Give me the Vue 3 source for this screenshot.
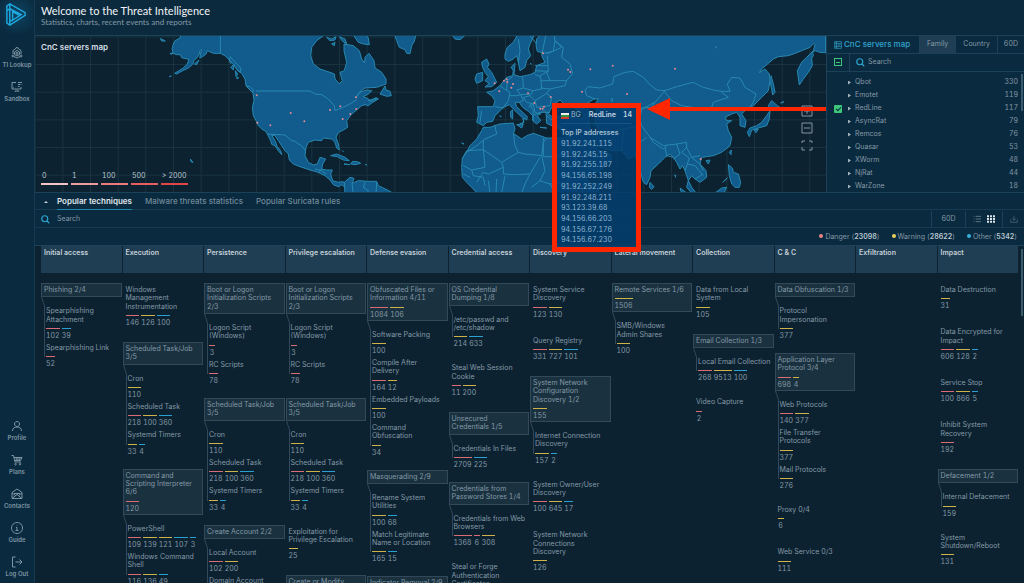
<script setup>
import { ref } from 'vue'

const topNav = [
  { label: 'TI Lookup', icon: 'lookup' },
  { label: 'Sandbox', icon: 'sandbox' },
]
const bottomNav = [
  { label: 'Profile', icon: 'profile' },
  { label: 'Plans', icon: 'plans' },
  { label: 'Contacts', icon: 'contacts' },
  { label: 'Guide', icon: 'guide' },
  { label: 'Log Out', icon: 'logout' },
]
const icons = {
  lookup: 'M9 4a3 3 0 0 1 6 0 M9 4L4 7v7 M15 4l5 3v7 M2 18a2 2 0 1 0 4 0a2 2 0 1 0-4 0 M18 18a2 2 0 1 0 4 0a2 2 0 1 0-4 0 M6 19l6 3l6-3 M12 7l5 3v5l-5 3l-5-3v-5z M12 11a2 2 0 1 0 .1 0',
  sandbox: 'M10 3H2v13h18v-4 M9 20h6 M8 22l2-3 M16 22l-2-3 M14 3h8 M14 7h5 M22 7v1 M14 11h3 M5 12v1',
  profile: 'M12 3a5 5 0 1 0 .1 0z M3 22c0-6 4-8 9-8s9 2 9 8',
  plans: 'M1 3h4l3 13h12 M6 7h16l-3 6H8 M10 7l1 6 M14 7v6 M18 7l-1 6 M9 19a1.500 1.500 0 1 0 .1 0z M18 19a1.500 1.500 0 1 0 .1 0z',
  contacts: 'M2 9l10-7l10 7v12H2z M2 10l7 5 M22 10l-7 5 M2 21l10-8l10 8 M6 11h12',
  guide: 'M12 1a11 11 0 1 0 .1 0z M12 6v1 M10 11h2v6 M9 17h6',
  logout: 'M9 2H3v20h6 M9 12h13 M17 7l5 5l-5 5',
}

const scale = [
  { label: '0', tone: 's0' },
  { label: '1', tone: 's1' },
  { label: '100', tone: 's2' },
  { label: '500', tone: 's3' },
  { label: '> 2000', tone: 's4' },
]

const ips = ['91.92.241.115', '91.92.245.15', '91.92.255.187', '94.156.65.198', '91.92.252.249', '91.92.248.211', '93.123.39.68', '94.156.66.203', '94.156.67.176', '94.156.67.230']

const families = [
  ['Qbot', 330], ['Emotet', 119], ['RedLine', 117], ['AsyncRat', 79], ['Remcos', 76],
  ['Quasar', 53], ['XWorm', 48], ['NjRat', 44], ['WarZone', 18],
]
const redline = ref(true)
const tabs = ['Popular techniques', 'Malware threats statistics', 'Popular Suricata rules']
const legend = [['Danger', 23098, 'r'], ['Warning', 28622, 'y'], ['Other', 5342, 'b']]

// A count is written as severity letter + value: r danger, y warning, b other
const parse = (s) => (s ? s.split(' ').map((c) => ({ tone: c[0], value: c.slice(1) })) : [])
const t = (name, counts, subs) => ({
  name,
  counts: parse(counts),
  subs: subs ? subs.map(([n, c]) => ({ name: n, counts: parse(c) })) : null,
})
const scheduled = () => t('Scheduled Task/Job 3/5', '', [['Cron', 'y110'], ['Scheduled Task', 'r218 y100 b360'], ['Systemd Timers', 'y33 b4']])
const bootLogon = () => t('Boot or Logon Initialization Scripts 2/3', '', [['Logon Script (Windows)', 'r3'], ['RC Scripts', 'r78']])

const columns = [
  { title: 'Initial access', items: [t('Phishing 2/4', '', [['Spearphishing Attachment', 'r102 b39'], ['Spearphishing Link', 'r52']])] },
  {
    title: 'Execution',
    items: [
      t('Windows Management Instrumentation', 'r146 y126 b100'),
      scheduled(),
      t('Command and Scripting Interpreter 6/6', 'r120', [['PowerShell', 'r109 y139 y121 b107 b3'], ['Windows Command Shell', 'r116 y136 b49']]),
    ],
  },
  { title: 'Persistence', items: [bootLogon(), scheduled(), t('Create Account 2/2', '', [['Local Account', 'r102 y200'], ['Domain Account', 'r100']])] },
  { title: 'Privilege escalation', items: [bootLogon(), scheduled(), t('Exploitation for Privilege Escalation', 'y25'), t('Create or Modify System Process 1/4', '', [['Windows Service', 'r100']])] },
  {
    title: 'Defense evasion',
    items: [
      t('Obfuscated Files or Information 4/11', 'r1084 y106', [['Software Packing', 'y100'], ['Compile After\nDelivery', 'r164 y12'], ['Embedded Payloads', 'y100'], ['Command Obfuscation', 'y34']]),
      t('Masquerading 2/9', '', [['Rename System Utilities', 'y100 b68'], ['Match Legitimate Name or Location', 'y165 b15']]),
      t('Indicator Removal 2/9', '', [['File Deletion', 'y100']]),
    ],
  },
  {
    title: 'Credential access',
    items: [
      t('OS Credential Dumping 1/8', '', [['/etc/passwd and /etc/shadow', 'y214 b633']]),
      t('Steal Web Session Cookie', 'r11 y200'),
      t('Unsecured Credentials 1/5', '', [['Credentials In Files', 'r2709 b225']]),
      t('Credentials from Password Stores 1/4', '', [['Credentials from Web Browsers', 'r1368 r6 y308']]),
      t('Steal or Forge Authentication Certificates', 'y100'),
    ],
  },
  {
    title: 'Discovery',
    items: [
      t('System Service Discovery', 'r123 y130'),
      t('Query Registry', 'r331 y727 b101'),
      t('System Network Configuration Discovery 1/2', 'y155', [['Internet Connection Discovery', 'y157 b2']]),
      t('System Owner/User Discovery', 'r100 y645 b17'),
      t('System Network Connections Discovery', 'y126'),
    ],
  },
  { title: 'Lateral movement', items: [t('Remote Services 1/6', 'y1506', [['SMB/Windows\nAdmin Shares', 'y100']])] },
  {
    title: 'Collection',
    items: [t('Data from Local System', 'y105'), t('Email Collection 1/3', '', [['Local Email Collection', 'r268 y9513 b100']]), t('Video Capture', 'r2')],
  },
  {
    title: 'C & C',
    items: [
      t('Data Obfuscation 1/3', '', [['Protocol Impersonation', 'y377']]),
      t('Application Layer Protocol 3/4', 'r698 y4', [['Web Protocols', 'r140 y377'], ['File Transfer\nProtocols', 'y377'], ['Mail Protocols', 'y276']]),
      t('Proxy 0/4', 'y6'),
      t('Web Service 0/3', 'y111'),
    ],
  },
  { title: 'Exfiltration', items: [] },
  {
    title: 'Impact',
    items: [
      t('Data Destruction', 'y31'),
      t('Data Encrypted for Impact', 'r606 y128 b2'),
      t('Service Stop', 'r100 y866 b5'),
      t('Inhibit System Recovery', 'r192'),
      t('Defacement 1/2', '', [['Internal Defacement', 'y159']]),
      t('System Shutdown/Reboot', 'y131'),
    ],
  },
]

const west = [
  'M545 100L540 112 525 120 520 130 516 145 520 158 530 162 541 162 545 171 567 176 562 190 550 202 524 218 530 220 548 210 565 202 578 191 582 180 590 172 597 163 600 150 604 146 602 160 599 172 608 168 618 160 622 150 640 158 661 158 675 165 688 178 691 188 700 184 705 198 715 212 725 218 735 235 738 255 748 265 758 275 760 283 762 300 757 320 760 345 768 360 775 375 785 385 797 392 802 400 812 420 815 431 825 435 835 450 845 462 842 450 832 438 825 420 815 403 825 405 835 420 845 435 855 450 865 460 868 478 880 490 900 498 930 508 955 515 975 525 990 538 1000 552 1015 558 1025 552 1035 560 1040 548 1028 543 1015 545 998 540 992 520 997 508 980 508 965 505 968 490 977 475 960 470 952 490 940 493 925 485 915 465 918 440 925 425 945 418 965 420 970 412 995 415 1005 425 1010 442 1018 448 1015 430 1008 410 1015 395 1030 388 1043 380 1040 360 1055 340 1070 328 1085 315 1095 312 1105 315 1118 305 1135 295 1128 291 1112 300 1100 292 1090 288 1108 278 1115 270 1100 268 1080 275 1068 290 1078 274 1095 262 1130 260 1158 250 1158 235 1145 215 1125 202 1122 180 1107 158 1095 170 1094 187 1085 175 1078 150 1060 135 1032 130 1032 150 1040 185 1033 210 1020 215 1027 240 1018 250 1005 235 1003 220 990 215 960 205 940 190 932 165 935 140 950 120 970 105 980 98z',
  'M1033 545L1050 530 1062 533 1056 548 1075 540 1105 542 1130 542 1135 555 1162 568 1187 582 1035 582z',
  'M1183 100L1190 120 1198 140 1215 147 1220 158 1230 159 1235 135 1243 122 1248 100z',
  'M1355 100L1365 115 1380 117 1400 100z',
  'M1058 100L1075 125 1090 130 1108 132 1105 112 1095 100z M980 110L995 115 1008 108 1005 118 990 120z M995 130L1005 125 1003 135z M1018 108L1035 115 1040 130 1028 122z',
  'M1140 280L1155 256 1158 268 1170 272 1174 285 1160 287z M1105 300L1130 292 1120 302z',
  'M992 465L1010 460 1035 470 1048 480 1030 478 1012 468z M1032 490L1050 492z M1052 490L1058 482 1075 484 1082 488 1065 492z M1095 491L1100 493z M1027 450L1030 453z M1385 427L1392 430z',
  'M481 114L487 116 496 121 485 121z M510 158L519 157 514 162z M583 190L597 178 590 192z M508 228L514 226z M571 475L579 485 574 484z M692 200L702 190 700 208z M706 210L713 220 708 228z M712 228L716 232 710 234z',
  'M690 168L700 178 712 192 722 202 722 216 710 205 700 190 688 178z M738 256L750 258 762 270 756 274z',
]
const europe = [
  'M1660 90L1665 120 1660 152 1630 158 1612 152 1608 135 1610 115 1625 98 1605 98 1590 130 1585 145 1592 165 1580 180 1575 200 1560 210 1555 185 1550 165 1540 175 1525 182 1515 175 1515 160 1522 140 1540 125 1555 98z M1640 90L2477 90 2477 156 2460 155 2445 150 2438 155 2440 165 2435 172 2437 195 2425 215 2410 235 2398 253 2392 210 2405 185 2420 170 2440 150 2445 132 2442 128 2430 140 2405 150 2380 160 2365 165 2335 168 2320 175 2285 205 2278 216 2295 205 2308 220 2310 240 2305 270 2285 290 2260 315 2235 330 2225 340 2238 360 2235 380 2220 375 2220 350 2210 335 2195 340 2175 350 2180 360 2195 360 2180 370 2185 390 2195 410 2190 435 2165 455 2140 465 2120 468 2105 470 2100 490 2118 510 2120 530 2100 545 2085 535 2075 525 2065 540 2075 560 2088 577 2075 577 2060 560 2065 540 2055 510 2048 495 2040 505 2030 485 2020 470 2010 460 1995 470 1975 490 1953 510 1950 530 1940 552 1930 545 1923 520 1910 480 1905 465 1885 475 1865 450 1835 450 1800 440 1770 430 1790 445 1830 460 1835 475 1800 510 1750 530 1715 480 1695 435 1700 395 1640 368 1638 335 1632 330 1612 345 1622 360 1610 370 1600 362 1598 345 1585 332 1568 320 1558 305 1545 305 1550 318 1568 335 1582 348 1580 358 1572 352 1570 365 1555 373 1572 365 1568 352 1540 325 1528 312 1510 320 1500 330 1485 345 1478 362 1460 365 1450 375 1430 365 1435 345 1433 318 1480 318 1485 300 1475 285 1460 275 1480 270 1500 255 1510 242 1520 230 1538 225 1540 210 1533 200 1545 188 1542 222 1560 228 1590 222 1605 215 1610 195 1635 185 1625 165z',
  'M1445 185L1460 175 1467 190 1462 200 1475 215 1485 235 1490 245 1475 258 1455 259 1468 248 1455 240 1465 228 1455 215 1448 200z M1430 220L1448 215 1448 240 1430 248 1425 235z',
  'M1450 380L1470 380 1500 370 1540 367 1545 385 1540 398 1565 415 1580 405 1600 398 1640 412 1700 412 1715 450 1740 510 1770 550 1800 548 1790 582 1435 582 1420 565 1400 545 1387 530 1385 500 1387 472 1400 455 1410 435 1430 415 1445 390z',
  'M1532 332L1538 328 1538 355 1532 350z M1499 346L1504 348z M1550 372L1570 370 1565 382z M1620 380L1640 382z M1590 188L1594 190z',
  'M2313 225L2320 250 2325 275 2318 283 2312 250z M2305 315L2315 300 2332 315 2342 322 2320 330 2308 325z M2310 330L2308 355 2300 375 2275 382 2255 388 2248 408 2242 395 2250 382 2270 375 2285 365 2300 345z M2262 388L2275 385 2268 396z M2188 455L2194 448 2193 462z M2185 492L2197 502 2200 515 2215 520 2222 545 2218 560 2205 560 2195 550 2188 525z M2118 480L2130 478 2125 490z M1950 545L1962 558 1955 566 1948 560z M2040 562L2060 577 2045 577z M2145 577L2165 562 2180 560 2172 577z M2025 522L2027 530z M2342 307L2352 303z M2168 545L2182 532z',
]
const seas = [
  'M1655 320L1665 308 1680 298 1690 308 1710 312 1735 330 1755 345 1740 355 1690 345 1660 350 1645 340z',
  'M1762 308L1780 296 1795 294 1785 312 1790 330 1785 370 1800 390 1785 405 1770 385 1765 350z',
  'M1832 298L1838 292 1836 304z M2145 142L2150 138z',
]
const borders = 'M661 105V158 M768 271H930L945 280 965 282 985 295 1003 315 1005 330 1025 322 1050 310 1070 297 M802 400L855 403 875 420 885 422 893 428 905 436 915 448'
  + ' M945 505L965 510 980 520 M965 505L955 518 M1095 545L1090 560 1105 570 1100 582 M1056 548L1060 582 M1130 545L1128 582'
  + ' M1755 268L1765 258 1800 262 1838 250 1842 228 1875 215 1900 212 1930 230 1950 252 1970 268 1995 270 2030 258 2060 250 2080 245 2110 260 2140 268 2170 273 2190 272 2182 250 2195 230 2220 232 2235 260 2268 280 2260 305 2245 325'
  + ' M1990 268L2015 300 2045 315 2090 322 2135 320 2140 305 2185 290 2165 275 M1995 270L1965 305 1925 325 1920 355 1925 375 1950 410 1990 435 2030 430 2060 425 2060 440 2075 470 2100 465'
  + ' M1755 268L1760 285 1785 295 M1800 320L1840 315 1855 330 1890 320 1930 322 1955 320 1965 305 M1800 390L1835 395 1870 385 1920 375 M1870 385L1865 450 M1905 465L1915 430 1940 410 M1950 410L1960 425 1990 445 2000 436 M1995 440L2000 465 2020 470 M2030 430L2040 460 2020 475 M2060 440L2045 455 2068 472 2062 490 2085 495 2110 525 M2062 490L2055 510 M2085 535L2110 520 M2075 470L2100 490 2110 510'
  + ' M1700 395L1750 395 1785 400 M1700 395L1720 430 1755 440 M1640 345L1700 395 M1795 510L1755 500 M1830 460L1800 480'
  + ' M1485 318L1513 322 M1445 330L1440 365 M1500 255L1520 270 1530 275 1525 300 1510 320 M1520 270L1522 240 1538 228 M1568 228L1570 262 1550 268 1562 282 1590 280 M1530 285L1550 285 1562 282 1570 300 1558 305 M1570 262L1600 270 1625 265 1622 228 1605 222 M1600 270L1590 285 1605 300 1640 278 1650 265 1695 255 1700 240 1718 218 1710 190 1685 170 1690 140 1665 120 M1622 240L1650 240 1700 240 M1590 285L1570 290 1580 305 1600 310 1605 335 1622 342 M1605 300L1610 320 1650 315 1655 290 1640 278 M1600 310L1585 320 M1598 345L1620 335 1650 335 M1650 265L1622 262 M1590 310L1600 330 1598 360 M1605 195L1642 195 M1605 210L1645 212 M1642 165L1645 212 1620 225 M1650 240L1640 215 M1555 185L1560 150 1555 115 M1610 130L1590 105 M1665 120L1685 140 1640 160'
  + ' M1484 372L1490 400 1455 415 1430 435 1400 455 M1450 418L1450 447 1400 450 1388 472 M1450 447L1505 485 1555 455 1545 435 1540 398 M1555 455L1575 460 1625 465 1630 425 1640 412 M1630 412L1630 468 1700 468 M1505 485L1510 500 1465 520 1450 515 1440 530 M1450 447L1455 500 1415 508 1390 495 M1415 508L1420 525 1450 530 1455 555 M1510 500L1510 520 1540 522 1590 520 1620 470 M1590 520L1575 550 1565 577 M1625 465L1635 510 1620 540 1650 550 1665 577 M1700 468L1715 520 1700 545 1650 550 M1465 540L1470 577 M1490 535L1488 577 M1515 525L1505 577 M1390 520L1410 530 M1595 560L1620 540 M1440 530L1430 545'
const hits = [[770, 284], [872, 337], [772, 366], [811, 374], [913, 362], [990, 328], [1021, 317], [1028, 355], [1051, 340], [1069, 325], [1068, 290], [1484, 248], [1498, 272], [1512, 240], [1520, 236], [1522, 244], [1534, 261], [1539, 250], [1584, 278], [1603, 307], [1621, 324], [1628, 324], [1632, 318], [1652, 289], [1629, 158], [1704, 207], [1711, 214], [1771, 206], [1838, 195], [1746, 273], [1881, 280], [2025, 204], [2102, 475]]
</script>

<template>
  <div class="app">
    <nav class="side" aria-label="Main">
      <a class="logo" href="#" aria-label="Home">
        <svg viewBox="0 0 24 24"><path d="M3 3v18l3 2V1z M6 1l16 9v3L6 23 M6 6l12 6L9 18V9l7 4 M3 8l3-2 M6 19l3-1" /></svg>
      </a>
      <a v-for="n in topNav" :key="n.label" class="nav" href="#">
        <svg viewBox="0 0 24 24"><path :d="icons[n.icon]" /></svg>
        <span>{{ n.label }}</span>
      </a>
      <div class="spacer"></div>
      <a v-for="n in bottomNav" :key="n.label" class="nav" href="#">
        <svg viewBox="0 0 24 24"><path :d="icons[n.icon]" /></svg>
        <span>{{ n.label }}</span>
      </a>
    </nav>

    <main class="main">
      <header class="head">
        <h1>Welcome to the Threat Intelligence</h1>
        <p>Statistics, charts, recent events and reports</p>
      </header>

      <section class="top">
        <div class="map">
          <svg class="world" viewBox="105 106 2373 470" preserveAspectRatio="xMinYMin slice">
            <defs>
              <pattern id="cells" x="104" y="107" width="83" height="83" patternUnits="userSpaceOnUse">
                <path d="M0 1.500H83 M1.500 0V83" />
              </pattern>
            </defs>
            <rect class="water" x="105" y="106" width="2373" height="470" />
            <rect x="105" y="106" width="2373" height="470" fill="url(#cells)" />
            <path v-for="d in west" :key="d" class="land" :d="d" />
            <path v-for="d in europe" :key="d" class="land" :d="d" />
            <path v-for="d in seas" :key="d" class="sea" :d="d" />
            <path class="border" :d="borders" />
            <circle v-for="(h, i) in hits" :key="i" class="hit" :cx="h[0]" :cy="h[1]" r="3" />
          </svg>
          <h2>CnC servers map</h2>
          <ul class="scale">
            <li v-for="s in scale" :key="s.label"><span>{{ s.label }}</span><i :class="s.tone"></i></li>
          </ul>
          <div class="tools">
            <button aria-label="Zoom in"><svg viewBox="0 0 12 12"><path d="M1 1h10v10H1z M3 6h6 M6 3v6" /></svg></button>
            <button aria-label="Zoom out"><svg viewBox="0 0 12 12"><path d="M1 1h10v10H1z M3 6h6" /></svg></button>
            <button aria-label="Full screen"><svg viewBox="0 0 12 12"><path d="M1 4V2h3 M8 2h3v2 M11 8v3H8 M4 11H1V8" /></svg></button>
          </div>
          <div class="popup">
            <div class="pophead"><i class="flag"></i><span>BG</span><b>RedLine</b><b class="n">14</b></div>
            <strong>Top IP addresses</strong>
            <ul><li v-for="ip in ips" :key="ip">{{ ip }}</li></ul>
          </div>
          <div class="arrow"><svg viewBox="0 0 23 22"><path d="M0 11L23 0V22z" /></svg><i></i></div>
        </div>

        <aside class="panel">
          <div class="phead">
            <h2>
              <svg viewBox="0 0 12 12"><path d="M1 1h10v10H1z M1 4h10 M1 8h10 M3 2v1 M3 6h1 M6 6h3 M3 9v1 M4 1v10" /></svg>
              CnC servers map
            </h2>
            <button class="on">Family</button>
            <button>Country</button>
            <button>60D</button>
          </div>
          <div class="psearch">
            <button class="minus" aria-label="Collapse selection"></button>
            <label>
              <svg viewBox="0 0 12 12"><circle cx="5" cy="5" r="4" /><path d="M8 8l3 3" /></svg>
              <input type="text" placeholder="Search" aria-label="Search families" />
            </label>
          </div>
          <ul class="families">
            <li v-for="[name, n] in families" :key="name">
              <span class="tick"><input v-if="name === 'RedLine'" v-model="redline" type="checkbox" :aria-label="name" /></span>
              <i></i><span class="name">{{ name }}</span><span>{{ n }}</span>
            </li>
          </ul>
          <div class="thumb"></div>
        </aside>
      </section>

      <div class="tabs">
        <i class="caret"></i>
        <button v-for="(tab, i) in tabs" :key="tab" :class="{ on: i === 0 }">{{ tab }}</button>
      </div>

      <div class="bar">
        <label>
          <svg viewBox="0 0 12 12"><circle cx="5" cy="5" r="4" /><path d="M8 8l3 3" /></svg>
          <input type="text" placeholder="Search" aria-label="Search techniques" />
        </label>
        <button class="days">60D</button>
        <div class="views">
          <button aria-label="List view"><svg viewBox="0 0 12 12"><path d="M1 2h1 M4 2h8 M1 6h1 M4 6h8 M1 10h1 M4 10h8" /></svg></button>
          <button class="on" aria-label="Grid view"><svg viewBox="0 0 12 12"><path d="M0 2h3 M4.500 2h3 M9 2h3 M0 6h3 M4.500 6h3 M9 6h3 M0 10h3 M4.500 10h3 M9 10h3" /></svg></button>
        </div>
        <button class="down" aria-label="Download"><svg viewBox="0 0 12 12"><path d="M1 7v4h10V7 M6 1v7 M3 5l3 3l3-3" /></svg></button>
      </div>

      <ul class="legend">
        <li v-for="[name, n, tone] in legend" :key="name"><i :class="tone"></i>{{ name }} (<b>{{ n }}</b>)</li>
      </ul>

      <section class="matrix">
        <div v-for="c in columns" :key="c.title" class="col">
          <h3>{{ c.title }}</h3>
          <template v-for="item in c.items" :key="item.name">
            <div class="tech" :class="{ boxed: item.subs }">
              <p>{{ item.name }}</p>
              <div v-if="item.counts.length" class="counts">
                <span v-for="(n, i) in item.counts" :key="i" :class="n.tone">{{ n.value }}</span>
              </div>
            </div>
            <div v-if="item.subs" class="subs">
              <svg viewBox="0 0 4 9"><path d="M0.500 0L3.500 9" /></svg>
              <div v-for="s in item.subs" :key="s.name" class="sub">
                <p>{{ s.name }}</p>
                <div class="counts">
                  <span v-for="(n, i) in s.counts" :key="i" :class="n.tone">{{ n.value }}</span>
                </div>
              </div>
            </div>
          </template>
        </div>
        <div class="thumb"></div>
      </section>
    </main>
  </div>
</template>

<style>
body { background: #0c2231; }
</style>

<style scoped>
* { box-sizing: border-box; margin: 0; padding: 0; }
ul { list-style: none; }
button { background: none; border: 0; color: inherit; font: inherit; cursor: pointer; }
input { font: inherit; color: #8fa4b0; background: none; border: 0; outline: 0; min-width: 0; }
input::placeholder { color: #8197a5; opacity: 1; }
a { text-decoration: none; color: inherit; }
svg { display: block; fill: none; stroke: currentColor; }
.app { display: flex; height: 100vh; overflow: hidden; font: 7px/1.19 Inter, "Open Sans", sans-serif; font-variant-numeric: tabular-nums; color: #8499a6; background: #0c2231; }

.side { flex: none; width: 35px; display: flex; flex-direction: column; align-items: center; background: #0a2a3f; border-right: 1px solid #163a4f; }
.logo { width: 34px; height: 40px; padding: 3px 4px; color: #1fa8e0; background: radial-gradient(circle at 50% 35%, #0d4562, #0a2a3f 70%); }
.logo svg { width: 23px; height: 23px; stroke-width: 1.500; }
.nav { width: 32px; height: 34px; display: flex; flex-direction: column; align-items: center; gap: 2px; padding-top: 7px; color: #7d95a4; font-size: 6px; font-weight: 600; white-space: nowrap; }
.nav svg { width: 12px; height: 12px; stroke-width: 2; }
.spacer { flex: 1; }

.main { flex: 1; min-width: 0; display: flex; flex-direction: column; }
.head { height: 35px; padding: 4px 6px; background: #0b2a3e; }
.head h1 { font: 400 11px/13px Lato, sans-serif; color: #f0f4f7; }
.head p { font: 8px/10px Lato, sans-serif; color: #8499a6; }

.top { display: flex; height: 158px; border: solid #1b4258; border-width: 1px 0; }
.map { position: relative; flex: 1; min-width: 0; }
.world { width: 100%; height: 100%; overflow: hidden; }
.water { fill: #0c2231; stroke: none; }
pattern path { stroke: #18323f; stroke-width: 3; }
rect { stroke: none; }
.land { fill: #115b8d; stroke: #2889b0; stroke-width: 3; stroke-linejoin: round; }
.sea { fill: #0c2231; stroke: #2889b0; stroke-width: 3; }
.border { stroke: #2889b0; stroke-width: 3; }
.hit { fill: #e58a90; stroke: none; }
.map h2 { position: absolute; left: 6px; top: 6px; font-size: 8px; line-height: 10px; font-weight: 600; color: #d6dfe5; }
.scale { position: absolute; left: 6px; bottom: 7px; display: flex; gap: 3px; color: #b9c6cf; }
.scale li { width: 27px; white-space: nowrap; }
.scale span { display: block; height: 11px; line-height: 8px; padding-left: 1px; }
.scale i { display: block; height: 2px; }
.s0 { background: #f4c3c6; }
.s1 { background: #ef9b9e; }
.s2 { background: #eb7a7c; }
.s3 { background: #e65f5e; }
.s4 { background: #e04646; }
.tools { position: absolute; right: 13px; top: 69px; display: flex; flex-direction: column; gap: 5px; color: #83939c; }
.tools svg { width: 12px; height: 12px; }

.popup { position: absolute; z-index: 3; left: 517px; top: 67px; width: 89px; height: 149px; padding: 0 4px; border: 5px solid #ff2600; background: rgba(4, 62, 110, .84); color: #9eb8ca; }
.popup li { line-height: 1.53; color: #8fb6d2; }
.popup strong { display: block; line-height: 12px; font-weight: 500; color: #b4c9d8; }
.pophead { display: flex; align-items: center; height: 16px; margin-bottom: 3px; border-bottom: 1px solid #145681; }
.pophead b { font-weight: 600; color: #c4d4e0; margin-left: 8px; }
.pophead .n { margin-left: auto; }
.flag { width: 8px; height: 6px; margin-right: 2px; background: linear-gradient(#eee 0 33%, #36923c 33% 67%, #d43a2c 67%); }
.arrow { position: absolute; z-index: 3; left: 612px; right: 0; top: 62px; display: flex; align-items: center; }
.arrow svg { width: 23px; height: 22px; fill: #ff2600; stroke: none; }
.arrow i { flex: 1; height: 4px; background: #ff2600; }

.panel { position: relative; flex: none; width: 198px; background: #0a2a3f; border-left: 1px solid #1b4258; overflow: hidden; }
.phead { display: flex; height: 18px; border-bottom: 1px solid #1b4258; }
.phead h2 { flex: 1; display: flex; align-items: center; gap: 2px; padding-left: 7px; font-size: 8px; font-weight: 500; color: #32a5cf; white-space: nowrap; }
.phead h2 svg { width: 8px; height: 8px; }
.phead button { padding: 0 7px; border-left: 1px solid #1b4258; }
.phead button:last-child { padding: 0 6px; }
.phead .on { background: #1f3e53; }
.psearch { display: flex; height: 18px; border-bottom: 1px solid #1b4258; }
.minus { width: 8px; height: 8px; margin: 4px 7px; border: 1px solid #3ec77b; background: linear-gradient(#3ec77b, #3ec77b) center / 4px 1px no-repeat; }
label { flex: 1; display: flex; align-items: center; }
label svg { width: 9px; height: 9px; color: #2ea5d0; stroke-width: 1.500; }
.psearch label { gap: 3px; padding-left: 6px; border-left: 1px solid #1b4258; }
.families { padding-top: 4px; }
.families li { display: flex; align-items: center; height: 13px; padding: 0 6px 0 7px; }
.tick { width: 14px; }
.tick input { display: block; appearance: none; width: 8px; height: 8px; border-radius: 1px; background: #3ec77b; }
.tick input:checked::after { content: ""; display: block; width: 4px; height: 2px; margin: 2px; border: solid #0a2a3f; border-width: 0 0 1px 1px; transform: rotate(-45deg); }
.families i { width: 7px; height: 4px; background: #a3b4be; clip-path: polygon(0 0, 3px 50%, 0 100%); }
.name { flex: 1; }
.thumb { position: absolute; right: 1px; top: 38px; width: 2px; height: 37px; background: #3a5a6e; }

.tabs { display: flex; flex: none; height: 17px; padding-left: 9px; background: #0a2a3f; border-bottom: 1px solid #163a4f; font-size: 8px; }
.tabs button { height: 17px; margin-right: 13px; padding-top: 2px; font-weight: 500; color: #71899a; border-bottom: 1px solid transparent; }
.tabs .on { color: #e0e7ec; font-weight: 600; border-color: #2584a9; }
.caret { width: 4px; height: 2px; margin: 8px 9px 0 0; background: #c4d0d8; clip-path: polygon(50% 0, 100% 100%, 0 100%); }
.bar { display: flex; flex: none; height: 18px; padding-top: 1px; background: #0a2a3f; border-bottom: 1px solid #163a4f; }
.bar label { padding-left: 6px; gap: 7px; }
.days, .views, .down { flex: none; border-left: 1px solid #1b4258; }
.days { width: 34px; }
.views { display: flex; align-items: center; gap: 6px; width: 37px; padding-left: 7px; }
.views svg, .down svg { width: 8px; height: 8px; }
.views .on { color: #dce5ea; }
.views .on svg { stroke-width: 3; }
.down { display: flex; align-items: center; justify-content: center; width: 22px; color: #557083; }
.legend { display: flex; flex: none; justify-content: flex-end; align-items: center; gap: 12px; height: 17px; padding: 2px 7px 0; background: #0a2a3f; }
.legend b { font-weight: 600; color: #bdc9d1; }
.legend i { display: inline-block; width: 4px; height: 4px; margin-right: 2px; border-radius: 50%; vertical-align: 1px; }
.legend .r { background: #ec8585; }
.legend .y { background: #ecd05a; }
.legend .b { background: #36b1e0; }

.matrix { position: relative; flex: 1; min-height: 0; overflow: hidden; display: grid; grid-template-columns: repeat(12, minmax(0, 1fr)); gap: 1px; padding: 0 6px; border-top: 1px solid #1b4258; }
.matrix .thumb { top: 3px; height: 67px; }
h3 { height: 27px; margin-bottom: 10px; padding: 3px; font-size: 7px; font-weight: 600; color: #c4d0d8; background: #1f3e53; white-space: nowrap; }
.tech { padding: 2px; border: 1px solid transparent; margin-bottom: 13px; }
.tech p, .sub p { white-space: pre-line; }
.boxed { margin-bottom: 0; background: #1a3140; border-color: #33495a; }
.subs { position: relative; padding: 10px 0 1px 5px; margin-bottom: 13px; }
.subs::before { content: ""; position: absolute; left: 3px; top: 9px; bottom: 11px; width: 1px; background: #33495a; }
.subs > svg { position: absolute; left: 0; top: 0; width: 4px; height: 9px; color: #33495a; }
.sub + .sub { margin-top: 5px; }
.counts { display: flex; gap: 2px; padding-top: 4px; }
.counts span { min-width: 6px; line-height: 7px; text-align: center; color: #8499a6; }
.counts span::before { content: ""; display: block; height: 1px; margin-bottom: 3px; }
.counts .r::before { background: #d96c74; }
.counts .y::before { background: #cfb24a; }
.counts .b::before { background: #2aa0d0; }
</style>
